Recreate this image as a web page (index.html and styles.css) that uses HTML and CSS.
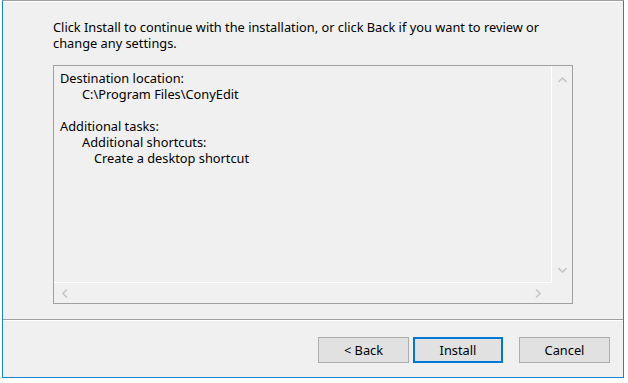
FILE: index.html
```html
<!DOCTYPE html>
<html>
<head>
<meta charset="utf-8">
<link rel="stylesheet" href="styles.css">
</head>
<body>
<div class="window">
  <div class="main">
    <p class="intro">Click Install to continue with the installation, or click Back if you want to review or change any settings.</p>
    <div class="memo">
      <div class="memo-content">
        <div class="line">Destination location:</div>
        <div class="line ind1">C:\Program Files\ConyEdit</div>
        <div class="line">&nbsp;</div>
        <div class="line">Additional tasks:</div>
        <div class="line ind1">Additional shortcuts:</div>
        <div class="line ind2">Create a desktop shortcut</div>
      </div>
      <div class="vscroll">
        <svg class="arrow" width="9" height="6" viewBox="0 0 9 6"><path d="M0.5 5 L4.5 1 L8.5 5" fill="none" stroke="#c6c6c6" stroke-width="1.6"/></svg>
        <svg class="arrow" width="9" height="6" viewBox="0 0 9 6"><path d="M0.5 1 L4.5 5 L8.5 1" fill="none" stroke="#c6c6c6" stroke-width="1.6"/></svg>
      </div>
      <div class="hscroll">
        <svg class="arrow" width="6" height="9" viewBox="0 0 6 9"><path d="M5 0.5 L1 4.5 L5 8.5" fill="none" stroke="#c6c6c6" stroke-width="1.6"/></svg>
        <svg class="arrow" width="6" height="9" viewBox="0 0 6 9"><path d="M1 0.5 L5 4.5 L1 8.5" fill="none" stroke="#c6c6c6" stroke-width="1.6"/></svg>
      </div>
      <div class="corner"></div>
    </div>
  </div>
  <div class="footer">
    <button class="btn">&lt; Back</button>
    <button class="btn default">Install</button>
    <button class="btn cancel">Cancel</button>
  </div>
</div>
</body>
</html>
```
FILE: styles.css
```css
html, body {
  margin: 0;
  padding: 0;
  background: #ffffff;
}
body {
  font-family: "Noto Sans", "Open Sans", sans-serif;
  font-size: 12.8px;
  color: #000;
}
.window {
  margin-left: 2px;
  width: 620px;
  height: 376px;
  background: #f0f0f0;
  border-top: 1px solid #a0a0a0;
  border-left: 1px solid #1883d7;
  border-right: 1px solid #1883d7;
  border-bottom: 1px solid #1883d7;
  box-shadow: inset 0 1px 0 #ffffff;
  display: flex;
  flex-direction: column;
}
.main {
  height: 319px;
  padding-left: 50px;
  box-sizing: border-box;
  border-bottom: 1px solid #a0a0a0;
  box-shadow: 0 1px 0 #ffffff;
}
.intro {
  margin: 0;
  padding-top: 18px;
  width: 520px;
  line-height: 16px;
  height: 46px;
}
.memo {
  width: 520px;
  height: 239px;
  box-sizing: border-box;
  border: 1px solid #a0a0a0;
  display: grid;
  grid-template-columns: 1fr 20px;
  grid-template-rows: 1fr 20px;
}
.memo-content {
  padding: 4px 0 0 6px;
  border-right: 1px solid #ffffff;
  border-bottom: 1px solid #ffffff;
  line-height: 16px;
}
.ind1 { padding-left: 22px; }
.ind2 { padding-left: 34px; }
.vscroll {
  display: flex;
  flex-direction: column;
  justify-content: space-between;
  align-items: center;
  padding: 11px 0 10px;
}
.hscroll {
  display: flex;
  justify-content: space-between;
  align-items: center;
  padding: 0 11px 0 8px;
}
.arrow { display: block; }
.footer {
  flex: 1;
  display: flex;
  align-items: flex-start;
  justify-content: flex-end;
  padding: 17px 13px 0 0;
}
.btn {
  width: 91px;
  height: 26px;
  box-sizing: border-box;
  background: #e1e1e1;
  border: 1px solid #adadad;
  font-family: "Noto Sans", "Open Sans", sans-serif;
  font-size: 12.8px;
  color: #000;
  padding: 0;
  margin: 0;
}
.btn + .btn { margin-left: 4px; }
.btn.default {
  border: 2px solid #0078d7;
  width: 90px;
}
.btn.cancel { margin-left: 16px; }
```
